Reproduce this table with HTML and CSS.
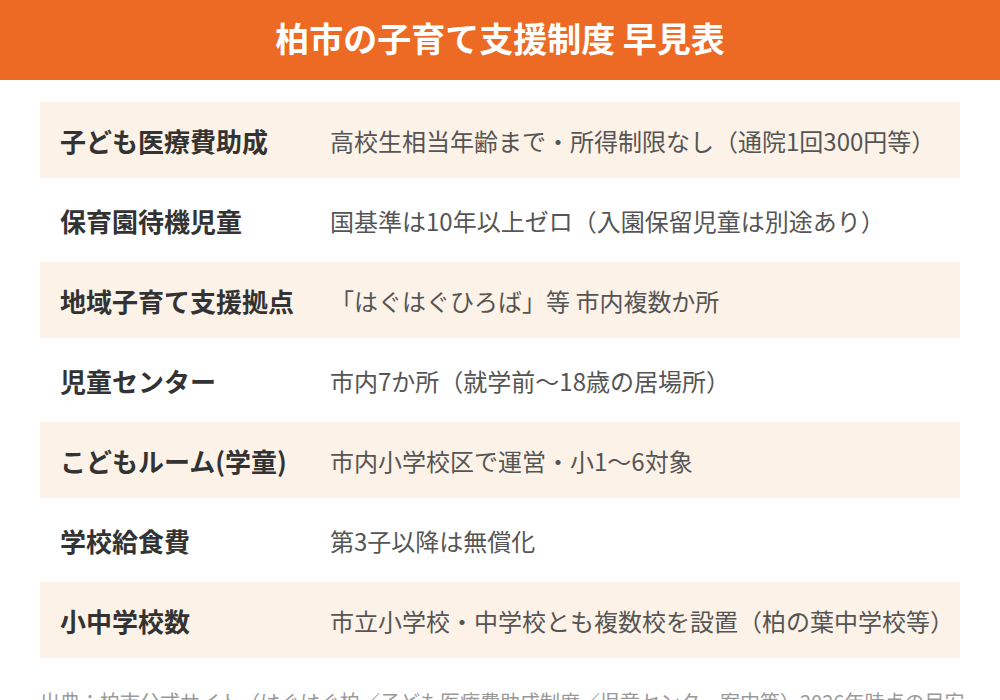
FILE: index.html
```html
<!DOCTYPE html>
<html lang="ja">
<head>
<meta charset="utf-8">
<title>柏市の子育て支援制度 早見表</title>
<link rel="stylesheet" href="styles.css">
</head>
<body>
<header class="header">
  <h1 class="title">柏市の子育て支援制度 早見表</h1>
</header>
<main class="table">
  <div class="row shaded"><div class="label">子ども医療費助成</div><div class="value">高校生相当年齢まで・所得制限なし（通院1回300円等）</div></div>
  <div class="row"><div class="label">保育園待機児童</div><div class="value">国基準は10年以上ゼロ（入園保留児童は別途あり）</div></div>
  <div class="row shaded"><div class="label">地域子育て支援拠点</div><div class="value">「はぐはぐひろば」等 市内複数か所</div></div>
  <div class="row"><div class="label">児童センター</div><div class="value">市内7か所（就学前〜18歳の居場所）</div></div>
  <div class="row shaded"><div class="label">こどもルーム(学童)</div><div class="value">市内小学校区で運営・小1〜6対象</div></div>
  <div class="row"><div class="label">学校給食費</div><div class="value">第3子以降は無償化</div></div>
  <div class="row shaded"><div class="label">小中学校数</div><div class="value">市立小学校・中学校とも複数校を設置（柏の葉中学校等）</div></div>
</main>
<p class="source">出典：柏市公式サイト（はぐはぐ柏／子ども医療費助成制度／児童センター案内等）2026年時点の目安</p>
</body>
</html>
```

FILE: styles.css
```css
html, body {
  margin: 0;
  padding: 0;
  background: #ffffff;
  font-family: "Noto Sans CJK JP", "Noto Sans", sans-serif;
}

.header {
  height: 80px;
  background: #ec6a24;
  display: flex;
  align-items: center;
  justify-content: center;
}

.title {
  margin: 0;
  color: #ffffff;
  font-size: 34px;
  font-weight: 700;
  line-height: 1;
  padding-bottom: 4px;
}

.table {
  margin: 22px 40px 0;
  display: flex;
  flex-direction: column;
  gap: 4px;
}

.row {
  height: 76px;
  display: grid;
  grid-template-columns: 270px 1fr;
  align-items: center;
  padding: 0 20px;
}

.row.shaded {
  background: #fdf2e7;
}

.label {
  font-size: 26px;
  font-weight: 700;
  color: #333333;
  white-space: nowrap;
}

.value {
  font-size: 24px;
  color: #555555;
  white-space: nowrap;
}

.source {
  margin: 28px 40px 0;
  font-size: 20px;
  line-height: 32px;
  color: #999999;
  white-space: nowrap;
}
```
